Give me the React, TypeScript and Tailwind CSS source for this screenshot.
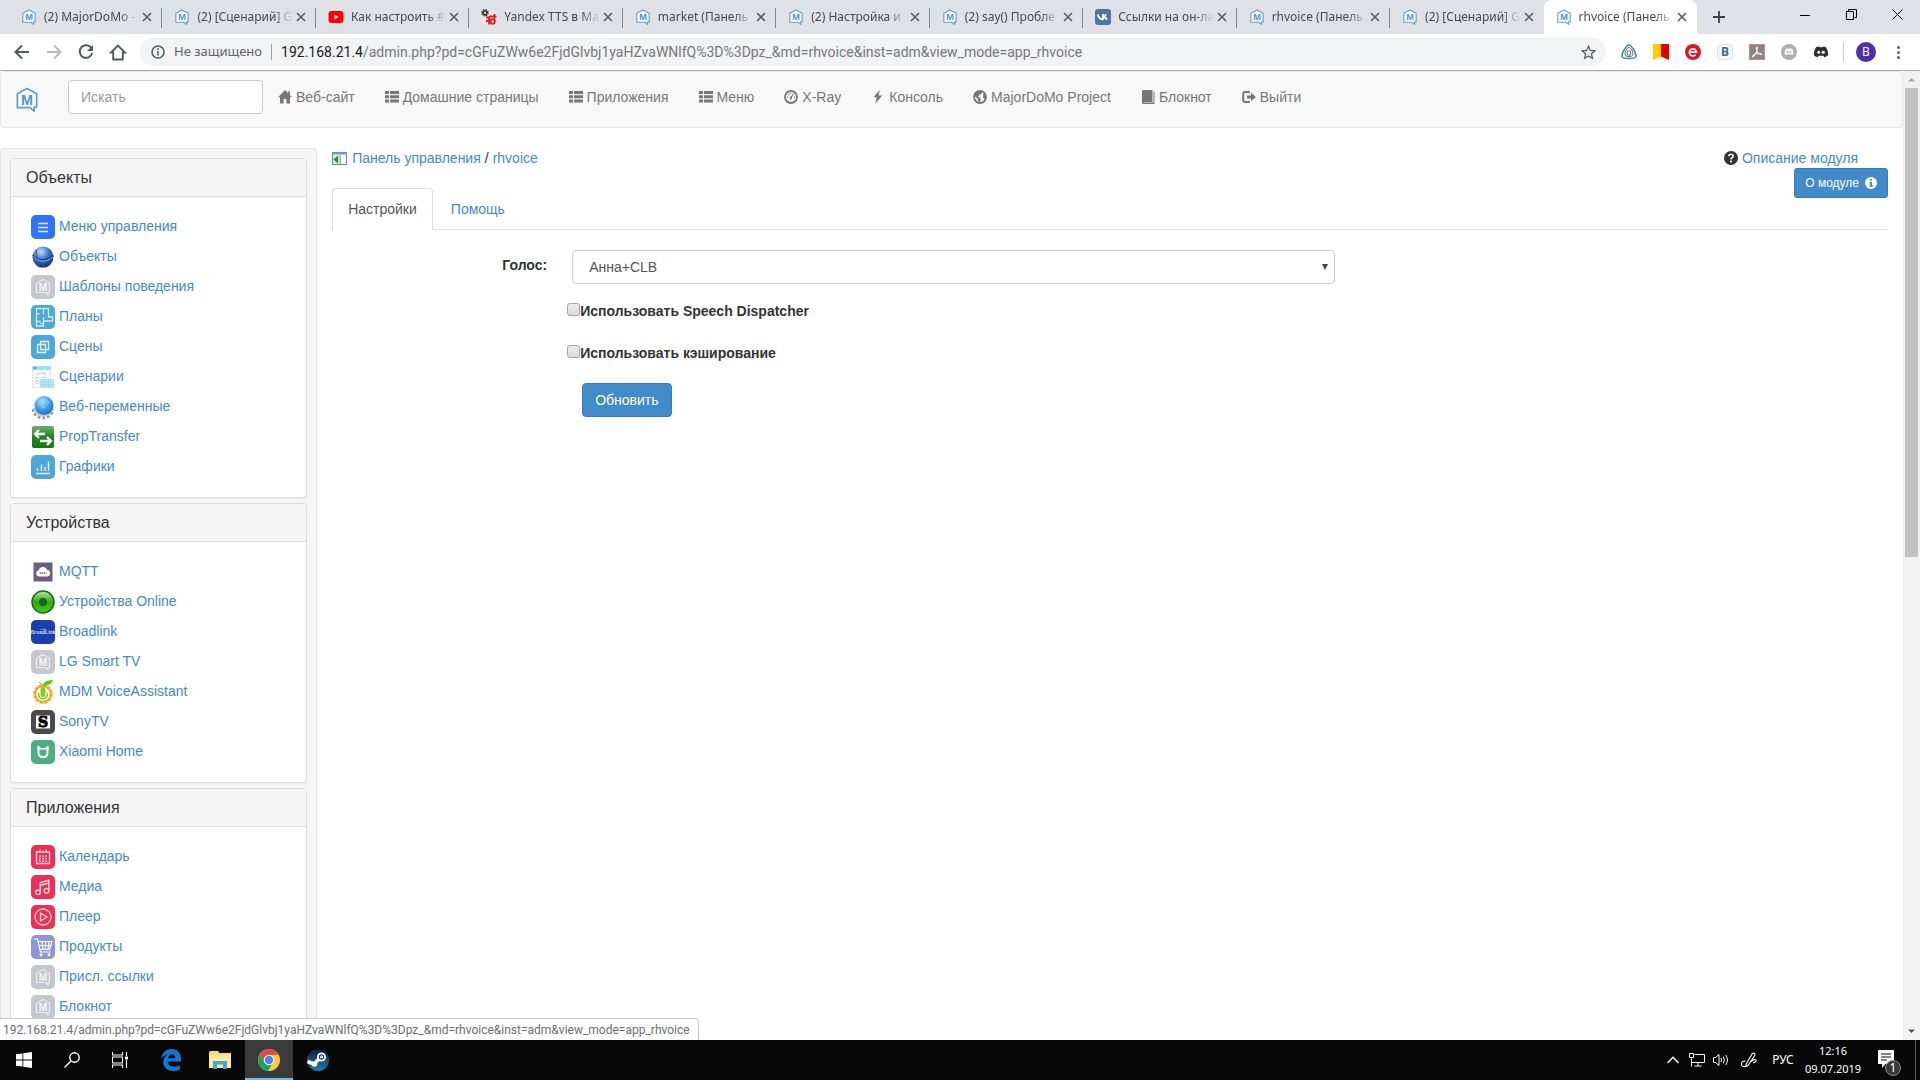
import React from "react";

type IconProps = { className?: string };

/* ---------- MajorDoMo mark ---------- */

function MdmMark({ className = "", fill = "white", stroke = "#5b9fd6", text = "#4a93d1" }: IconProps & { fill?: string; stroke?: string; text?: string }) {
  return (
    <svg viewBox="0 0 24 26" className={className} aria-hidden="true">
      <path d="M12 1.500 22 7v14h-2.500v4L15 21.500H2V7Z" fill={fill} stroke={stroke} strokeWidth="1.800" strokeLinejoin="round" />
      <text x="12" y="18.500" textAnchor="middle" fontFamily="Liberation Sans, sans-serif" fontWeight="700" fontSize="15" fill={text}>M</text>
    </svg>
  );
}

/* ---------- browser icons ---------- */

const Favicon = {
  mdm: () => <MdmMark className="h-4 w-4 shrink-0" />,
  youtube: () => (
    <svg viewBox="0 0 16 16" className="h-4 w-4 shrink-0">
      <rect x="0.500" y="2" width="15" height="12" rx="3" fill="#f00" />
      <path d="m6.500 5.500 4 2.500-4 2.500Z" fill="#fff" />
    </svg>
  ),
  gears: () => (
    <svg viewBox="0 0 16 16" className="h-4 w-4 shrink-0">
      <rect x="1" y="3" width="15" height="13" fill="#f1e3e3" />
      <circle cx="4" cy="3.800" r="2" fill="none" stroke="#3a3a3a" strokeWidth="1.800" />
      <circle cx="4" cy="3.800" r="3.200" fill="none" stroke="#3a3a3a" strokeWidth="1.200" strokeDasharray="1.400 1.100" />
      <circle cx="11.500" cy="12.500" r="2.300" fill="none" stroke="#d22" strokeWidth="2" />
      <path d="M5 8.500h3v7M8 7.500h7.500M13.500 5v5M5 12h3" stroke="#d22" strokeWidth="1.800" fill="none" />
    </svg>
  ),
  vk: () => (
    <svg viewBox="0 0 16 16" className="h-4 w-4 shrink-0">
      <rect width="16" height="16" rx="3" fill="#4a76a8" />
      <path d="M2.800 5.500c.8 3 2.300 5 5.200 5M8 5v5.500M8 8c1.500-.3 2.500-1.200 3-2.800M8.300 7.800c1.700.3 2.900 1.200 3.600 2.900" stroke="#fff" strokeWidth="1.900" fill="none" />
    </svg>
  ),
};

const Cross = ({ className = "h-2.5 w-2.5" }: IconProps) => (
  <svg viewBox="0 0 10 10" className={className} fill="none" stroke="currentColor" strokeWidth="1.600">
    <path d="m1 1 8 8M9 1 1 9" />
  </svg>
);

type Tab = { icon: keyof typeof Favicon; title: string };
const tabs: Tab[] = [
  { icon: "mdm", title: "(2) MajorDoMo -" },
  { icon: "mdm", title: "(2) [Сценарий] G" },
  { icon: "youtube", title: "Как настроить #" },
  { icon: "gears", title: "Yandex TTS в Ma" },
  { icon: "mdm", title: "market (Панель" },
  { icon: "mdm", title: "(2) Настройка и" },
  { icon: "mdm", title: "(2) say() Пробле" },
  { icon: "vk", title: "Ссылки на он-ла" },
  { icon: "mdm", title: "rhvoice (Панель" },
  { icon: "mdm", title: "(2) [Сценарий] G" },
  { icon: "mdm", title: "rhvoice (Панель" },
];

function TabStrip() {
  return (
    <div className="flex h-[34px] shrink-0 items-stretch bg-[#dee1e6] pl-[9px]">
      <div className="flex min-w-0 shrink basis-[1688px]">
        {tabs.map((t, i) => {
          const active = i === tabs.length - 1;
          const Icon = Favicon[t.icon];
          return (
            <div key={i} className={"relative flex min-w-0 flex-1 items-center pl-3 pr-2.5 " + (active ? "rounded-t-lg bg-white" : "")}>
              <Icon />
              <span className="ml-[7px] min-w-0 flex-1 overflow-hidden whitespace-nowrap text-[12px] leading-5 text-[#45494d] [mask-image:linear-gradient(to_right,black_80%,transparent)]">
                {t.title}
              </span>
              <button aria-label="Закрыть вкладку" className="flex h-4 w-[13px] items-center justify-end text-[#5a5d61]">
                <Cross />
              </button>
              {i < tabs.length - 2 && <span className="absolute right-0 top-2 h-5 w-px bg-[#84878b]" />}
            </div>
          );
        })}
      </div>
      <button aria-label="Новая вкладка" className="flex w-11 items-center justify-center text-[#3c4043]">
        <svg viewBox="0 0 12 12" className="h-3 w-3" stroke="currentColor" strokeWidth="1.800"><path d="M6 0v12M0 6h12" /></svg>
      </button>
      <div className="ml-auto flex h-[29px] text-black">
        <button aria-label="Свернуть" className="flex w-[46px] items-center justify-center">
          <svg viewBox="0 0 10 10" className="h-2.5 w-2.5" stroke="currentColor"><path d="M0 5.500h10" /></svg>
        </button>
        <button aria-label="Развернуть" className="flex w-[46px] items-center justify-center">
          <svg viewBox="0 0 11 11" className="h-[11px] w-[11px]" fill="none" stroke="currentColor"><path d="M.5 2.500h7v8h-7zM2.500 2.500v-2h8v8h-2" /></svg>
        </button>
        <button aria-label="Закрыть" className="flex w-[46px] items-center justify-center">
          <svg viewBox="0 0 11 11" className="h-[11px] w-[11px]" stroke="currentColor"><path d="m.5.5 10 10M10.500.5l-10 10" /></svg>
        </button>
      </div>
    </div>
  );
}

function Discord({ color, eyes }: { color: string; eyes: string }) {
  return (
    <svg viewBox="0 0 16 12" className="w-full">
      <path d="M3 1.300Q5 .3 6 .4l.5.900h3l.5-.9q1 0 3 .9 2 3 2.300 7.700-1.800 1.700-4 2.200l-.9-1.400h-4.800l-.9 1.400Q2.500 10.700.7 9 1 4.300 3 1.300Z" fill={color} />
      <circle cx="5.700" cy="6.300" r="1.500" fill={eyes} />
      <circle cx="10.300" cy="6.300" r="1.500" fill={eyes} />
    </svg>
  );
}

function Toolbar() {
  return (
    <div className="flex h-[37px] shrink-0 items-center border-b border-[#aeacad] bg-white text-[#55585c]">
      <div className="flex w-[140px] items-center gap-2 pl-[10px]">
        <button aria-label="Назад" className="flex h-6 w-6 items-center justify-center">
          <svg viewBox="0 0 16 16" className="h-4 w-4" fill="none" stroke="currentColor" strokeWidth="2"><path d="M15 8H2M8 1.500 1.500 8 8 14.500" /></svg>
        </button>
        <button aria-label="Вперёд" className="flex h-6 w-6 items-center justify-center text-[#b9bbbd]">
          <svg viewBox="0 0 16 16" className="h-4 w-4" fill="none" stroke="currentColor" strokeWidth="2"><path d="M1 8h13M8 1.500 14.500 8 8 14.500" /></svg>
        </button>
        <button aria-label="Обновить страницу" className="flex h-6 w-6 items-center justify-center">
          <svg viewBox="0 0 16 16" className="h-4 w-4" fill="none" stroke="currentColor" strokeWidth="2"><path d="M13.600 4.500A6.300 6.300 0 1 0 14.200 9" /><path d="M15 1v6H9Z" fill="currentColor" stroke="none" /></svg>
        </button>
        <button aria-label="Главная" className="flex h-6 w-6 items-center justify-center">
          <svg viewBox="0 0 18 17" className="h-[17px] w-[18px]" fill="none" stroke="currentColor" strokeWidth="1.900"><path d="M9 1.500 2 8.500h2.200V15.500h9.600V8.500H16Z" /></svg>
        </button>
      </div>
      <div className="flex h-7 min-w-0 flex-1 items-center rounded-full bg-[#f1f3f4] pl-[11px] pr-[10px]">
        <svg viewBox="0 0 14 14" className="h-[14px] w-[14px] shrink-0" fill="none" stroke="currentColor" strokeWidth="1.500"><circle cx="7" cy="7" r="6" /><path d="M7 6v4.500M7 3.300v1.600" /></svg>
        <span className="ml-[9px] whitespace-nowrap text-[13px] text-[#5f6368]">Не защищено</span>
        <span className="mx-[9px] h-4 w-px bg-[#9a9da1]" />
        <span className="min-w-0 flex-1 overflow-hidden whitespace-nowrap font-[Roboto,sans-serif] text-[14px] text-[#74787c]">
          <span className="text-[#202124]">192.168.21.4</span>/admin.php?pd=cGFuZWw6e2FjdGlvbj1yaHZvaWNlfQ%3D%3Dpz_&amp;md=rhvoice&amp;inst=adm&amp;view_mode=app_rhvoice
        </span>
        <button aria-label="Добавить в закладки">
          <svg viewBox="0 0 16 16" className="h-[15px] w-[15px]" fill="none" stroke="currentColor" strokeWidth="1.300"><path d="m8 1.200 1.900 4.600 4.900.4-3.700 3.200 1.100 4.800L8 11.600l-4.200 2.600 1.100-4.800L1.200 6.200l4.900-.4Z" /></svg>
        </button>
      </div>
      <div className="flex items-center gap-4 pl-[15px] pr-[14px]">
        <button aria-label="Расширение" className="h-4 w-4">
          <svg viewBox="0 0 16 16" className="h-4 w-4" fill="none"><path d="M8 1C10.500 1 15.300 9 15 12.300c-.2 3-13.800 3-14 0C.7 9 5.500 1 8 1Z" stroke="#3f87a0" strokeWidth="1.500" /><path d="M8 3.500c2 0 4 4.200 4 6.200s-1.500 3-4 3-4-1-4-3 2-6.200 4-6.200Z" fill="#fff" stroke="#59686f" strokeWidth="1" /><ellipse cx="8" cy="9" rx="1.800" ry="2.500" stroke="#555" strokeWidth=".9" /></svg>
        </button>
        <button aria-label="Яндекс закладки" className="h-4 w-4">
          <svg viewBox="0 0 16 16" className="h-4 w-4"><path d="M0 0h8v12.500L0 16Z" fill="#fc0" /><path d="M8 0h8v16l-8-3.500Z" fill="#e60000" /></svg>
        </button>
        <button aria-label="Скидки" className="h-4 w-4">
          <svg viewBox="0 0 16 16" className="h-4 w-4" fill="none"><circle cx="8" cy="8" r="8" fill="#d9152b" /><path d="M4.300 8.200h7.200A3.600 3.600 0 1 0 10.600 10.800" stroke="#fff" strokeWidth="1.700" /></svg>
        </button>
        <button aria-label="ВКонтакте" className="flex h-4 w-4 items-center justify-center rounded-sm border border-[#dcdfe3] bg-[#f4f6f8] text-[12px] font-bold leading-none text-[#45688e]">B</button>
        <button aria-label="PDF" className="h-4 w-4">
          <svg viewBox="0 0 16 16" className="h-4 w-4" fill="none"><rect x=".5" y=".5" width="15" height="15" fill="#8a8584" stroke="#cf8a80" /><path d="M8 3c-1.300 0-.7 2.700.3 4.500 1.200 2 3.300 3.200 4.300 3 1-.6-2.300-1.500-4.800-.8C5 10.500 3 12 3.500 12.800c.8.6 2.700-2.500 3.800-4.700C8.300 6 8.700 3.300 8 3Z" stroke="#f3efee" strokeWidth="1.100" /></svg>
        </button>
        <button aria-label="Discord (неактивен)" className="flex h-4 w-4 items-center justify-center rounded-full bg-[#adadad] px-[3px]"><Discord color="#fff" eyes="#adadad" /></button>
        <button aria-label="Discord" className="flex h-4 w-4 items-center justify-center"><Discord color="#2e2e2e" eyes="#fff" /></button>
      </div>
      <span className="h-5 w-px bg-[#c9cbce]" />
      <button aria-label="Профиль" className="ml-3 flex h-5 w-5 items-center justify-center rounded-full bg-[#512da8] text-[12px] leading-none text-white">B</button>
      <button aria-label="Меню браузера" className="ml-5 mr-5 flex w-1 flex-col items-center gap-0.5">
        <i className="h-[3px] w-[3px] rounded-full bg-[#5f6368]" />
        <i className="h-[3px] w-[3px] rounded-full bg-[#5f6368]" />
        <i className="h-[3px] w-[3px] rounded-full bg-[#5f6368]" />
      </button>
    </div>
  );
}

/* ---------- site navigation ---------- */

const NavIcon: Record<string, React.ReactNode> = {
  home: <path d="M7 0 0 7.300h2V13.500h3.600V9h2.800v4.500H12V7.300h2l-2-2.100V1.300h-1.800v2Z" fill="currentColor" />,
  list: <path d="M0 1h4v3H0zm5 0h9v3H5zM0 5.300h4v3H0zm5 0h9v3H5zM0 9.600h4v3H0zm5 0h9v3H5z" fill="currentColor" />,
  dash: (
    <g fill="none" stroke="currentColor">
      <circle cx="7" cy="7" r="6" strokeWidth="1.800" />
      <path d="M7 7.500 9.500 3.500M4 4.300l.8.800M3 7.200h1M10 7.200h1M6.300 3v1" strokeWidth="1.200" />
      <circle cx="7" cy="8" r="1.200" fill="currentColor" stroke="none" />
    </g>
  ),
  flash: <path d="M8.800 0 2.500 7.300h3.300L4 14l7.300-8.400H7.500Z" fill="currentColor" />,
  globe: (
    <g>
      <circle cx="7" cy="7" r="6" fill="none" stroke="currentColor" strokeWidth="1.800" />
      <path d="M2 3.500 5 1.500l3.500.3L9 3.500 6.500 4.800 5 6.500l2 1.200.8 1.600L6.500 12 5 11 4.500 8.500 2 6.500ZM10 4.500l2-.5 1 2.500-1.300 2.700-1.500-1.500Z" fill="currentColor" />
    </g>
  ),
  book: <path d="M2.500 0h9v12H3.200v.6h9.300V1.500h1V14H2.300Q1 13.800 1 12.500V1.500Q1 .2 2.500 0Z" fill="currentColor" />,
  exit: (
    <g>
      <path d="M8 2H3.500Q1.200 2 1.200 4.300v5.400Q1.200 12 3.500 12H8" fill="none" stroke="currentColor" strokeWidth="2" />
      <path d="M5 5.500h4V2.800L14 7l-5 4.200V8.500H5Z" fill="currentColor" />
    </g>
  ),
};

const navItems: [string, string][] = [
  ["home", "Веб-сайт"],
  ["list", "Домашние страницы"],
  ["list", "Приложения"],
  ["list", "Меню"],
  ["dash", "X-Ray"],
  ["flash", "Консоль"],
  ["globe", "MajorDoMo Project"],
  ["book", "Блокнот"],
  ["exit", "Выйти"],
];

function NavBar() {
  return (
    <nav className="flex h-[57px] items-start rounded border border-[#e7e7e7] bg-[#f8f8f8]">
      <a href="#" aria-label="MajorDoMo" className="ml-[14px] mt-[15px]">
        <MdmMark className="h-[25px] w-6" />
      </a>
      <input
        aria-label="Искать"
        placeholder="Искать"
        className="ml-[29px] mt-2 h-[34px] w-[195px] rounded border border-[#ccc] bg-white px-3 text-[14px] placeholder:text-[#999]"
      />
      {navItems.map(([icon, label]) => (
        <a key={label} href="#" className="flex items-center gap-1 px-[15px] pb-[15px] pt-[15px] leading-5 text-[#777]">
          <svg viewBox="0 0 14 14" className="h-[14px] w-[14px]">{NavIcon[icon]}</svg>
          {label}
        </a>
      ))}
    </nav>
  );
}

/* ---------- sidebar ---------- */

const Tile = ({ bg, children }: { bg: string; children: React.ReactNode }) => (
  <svg viewBox="0 0 24 24" className="h-6 w-6 shrink-0" fill="none">
    <rect width="24" height="24" rx="5" fill={bg} />
    {children}
  </svg>
);

const Plain = ({ children }: { children: React.ReactNode }) => (
  <svg viewBox="0 0 24 24" className="h-6 w-6 shrink-0" fill="none">{children}</svg>
);

const mdmTile = (
  <Tile bg="#c6c6ce">
    <path d="m12 4.500 6.500 3.800v9.200H17v2.300l-2.800-2.300H5.500V8.300Z" stroke="#ececf0" strokeWidth="1.200" />
    <text x="12" y="16" textAnchor="middle" fontFamily="Liberation Sans, sans-serif" fontWeight="700" fontSize="10" fill="#f6f6f8">M</text>
  </Tile>
);

const icons: Record<string, React.ReactNode> = {
  menu: <Tile bg="#2f74fb"><path d="M7 8.500h10M7 12.500h10M7 16.500h10" stroke="#e4edff" strokeWidth="1.300" /></Tile>,
  objects: (
    <Plain>
      <defs>
        <radialGradient id="orb" cx=".4" cy=".25" r=".8"><stop offset="0" stopColor="#c4dcf7" /><stop offset=".45" stopColor="#3f78c9" /><stop offset="1" stopColor="#0b2470" /></radialGradient>
      </defs>
      <ellipse cx="12" cy="21" rx="7" ry="2" fill="#c9d2e4" />
      <circle cx="12" cy="12" r="10.500" fill="url(#orb)" />
      <path d="M1.800 10C6 16 15 17 22.300 10.500" stroke="#16357f" strokeWidth="1.200" />
      <path d="M5 4.500c0 6 3 13 9 17.500" stroke="#2a55a5" strokeWidth=".8" />
      <path d="M2.500 11.500C7 17 15 18 21.800 12" stroke="#a9c8f0" strokeWidth=".8" />
    </Plain>
  ),
  mdm: mdmTile,
  plans: <Tile bg="#4fa6d8"><path d="M5.500 3.500h12v8.500h4v4h-9v5h-7ZM12.500 3.500v6M12.500 12v3M5.500 9h3M5.500 16.500h4M9.500 18.500h3" stroke="#cdebf9" strokeWidth="1.300" /></Tile>,
  scenes: <Tile bg="#4fa6d8"><path d="M9.500 6.500h8v8h-8zM6.500 9.500h8v8h-8z" stroke="#e3f3fb" strokeWidth="1.300" /></Tile>,
  scripts: (
    <Plain>
      <rect x="1.500" y="1.500" width="18" height="21" fill="#f5f7f8" stroke="#dfe5e8" />
      <rect x="1" y="1" width="19" height="4" fill="#9fe0f2" />
      <path d="M2.500 3h3" stroke="#3b8fd0" strokeWidth="1.500" />
      <path d="M8 8h6M5 12.500h3M11 12.500h4M7 8v3M14 8v3M4.500 17l2-2 2 2-2 2Z" stroke="#b9c2c8" strokeDasharray="2 1" />
      <rect x="9" y="14" width="14" height="9" fill="#b6e6f3" />
      <path d="M9 17h14M9 20h14M13 14v9M18 14v9" stroke="#8fd3e8" strokeDasharray="1.500 1" />
    </Plain>
  ),
  web: (
    <Plain>
      <defs>
        <radialGradient id="globe" cx=".4" cy=".3" r=".8"><stop offset="0" stopColor="#b9e4ff" /><stop offset=".5" stopColor="#3ba0ea" /><stop offset="1" stopColor="#1565b8" /></radialGradient>
      </defs>
      <path d="M2.500 14a9.500 8.500 0 0 0 19 0" stroke="#8e9296" strokeWidth="3.500" strokeDasharray="2.500 2" />
      <path d="M3.500 13a8.500 7.500 0 0 0 17 0" stroke="#c9cbcd" strokeWidth="3" />
      <circle cx="13" cy="10.500" r="9.500" fill="url(#globe)" />
      <path d="M7 5q3 1 3 4t4 4M15 3q-1 3 3 5" stroke="#8cccf5" strokeWidth="1.200" />
    </Plain>
  ),
  prop: (
    <Plain>
      <defs><linearGradient id="prop" x1="0" y1="0" x2="0" y2="1"><stop offset="0" stopColor="#6fae6c" /><stop offset=".5" stopColor="#238322" /><stop offset="1" stopColor="#0a7a0c" /></linearGradient></defs>
      <rect x="1" y="1" width="22" height="22" rx="2" fill="url(#prop)" />
      <path d="M14 9H4.500M8 5 4 9l4 4M9 16h10.500M16 12l4 4-4 4" stroke="#f1f8f0" strokeWidth="2.400" />
    </Plain>
  ),
  charts: <Tile bg="#4fa6d8"><path d="M5 18.500h14M6.500 16v-3M10.500 16V9.500M14 16v-4M17.500 16V6.500" stroke="#e3f3fb" strokeWidth="1.400" /></Tile>,
  mqtt: (
    <Plain>
      <rect x="2.500" y="2.500" width="19" height="19" fill="#6d5d7f" />
      <path d="M8 16.500a3.200 3.200 0 0 1-.3-6.300 4.500 4.500 0 0 1 8.500-.2 3.300 3.300 0 0 1 .3 6.500Z" fill="#fff" />
      <path d="M8.500 13h7" stroke="#6d5d7f" strokeWidth="1.400" strokeDasharray="1.500 .6" />
    </Plain>
  ),
  online: (
    <Plain>
      <defs><linearGradient id="on" x1="0" y1="0" x2="0" y2="1"><stop offset="0" stopColor="#b6eaa0" /><stop offset=".5" stopColor="#2fa812" /><stop offset="1" stopColor="#45cc15" /></linearGradient></defs>
      <circle cx="12" cy="12" r="11" fill="url(#on)" stroke="#1c6b10" strokeWidth="1.500" />
      <circle cx="12" cy="12" r="4" fill="#1d5f22" />
    </Plain>
  ),
  broadlink: (
    <Tile bg="#1b40ae">
      <text x="12" y="14" textAnchor="middle" fontFamily="Liberation Sans, sans-serif" fontWeight="700" fontSize="5" fill="#cfd9f5">BroadLink</text>
      <path d="M9.500 10q3-2 6 0" stroke="#9db2e8" strokeWidth=".8" />
    </Tile>
  ),
  voice: (
    <Plain>
      <circle cx="12" cy="14" r="8.300" stroke="#f7a823" strokeWidth="2.800" strokeDasharray="3.300 1" />
      <circle cx="12" cy="14" r="7.700" stroke="#f7a823" strokeWidth="1.500" />
      <path d="M12 5.500Q13 1 21.500.5 20 5 12 5.500ZM8 2l3.500 3.500" fill="#63c21c" stroke="#63c21c" />
      <rect x="9.500" y="7" width="5" height="10" rx="2.500" fill="#7ad321" />
      <path d="M7.500 13q0 6 4.500 6t4.500-6" stroke="#7ad321" strokeWidth="1.600" />
    </Plain>
  ),
  sony: (
    <Tile bg="#4b4b4b">
      <rect x="5" y="5.500" width="14" height="13" fill="#fff" />
      <text x="12" y="17.200" textAnchor="middle" fontFamily="DejaVu Serif, serif" fontWeight="700" fontSize="14" fill="#000" stroke="#000" strokeWidth="1">S</text>
    </Tile>
  ),
  xiaomi: <Tile bg="#4caf82"><path d="M7.500 6v6.500q0 4.700 4.500 4.700t4.500-4.700V6.500" stroke="#fff" strokeWidth="1.900" /><path d="M6.600 5.500 10 8h4l3.400-2.500V10h-1.900V8.800L14.600 9.600H9.400L8.500 8.800V10H6.600Z" fill="#fff" /></Tile>,
  calendar: <Tile bg="#ec2f55"><path d="M5.500 7h13v11.500h-13zM9 4.500V8M15 4.500V8" stroke="#ffd3dc" strokeWidth="1.300" /><path d="M8 11h8M8 13.500h8M8 16h8" stroke="#ffd3dc" strokeWidth="1.300" strokeDasharray="1.800 1.200" /></Tile>,
  media: <Tile bg="#ec2f55"><path d="M9.300 17V7.500l8.500-2.300V15.500M9.300 10.300l8.500-2.300" stroke="#ffd3dc" strokeWidth="1.400" /><circle cx="7" cy="17.300" r="2.300" stroke="#ffd3dc" strokeWidth="1.400" /><circle cx="15.500" cy="15.700" r="2.300" stroke="#ffd3dc" strokeWidth="1.400" /></Tile>,
  player: <Tile bg="#ec2f55"><circle cx="12" cy="12" r="8" stroke="#ffd3dc" strokeWidth="1.300" /><path d="M9.500 8v8l6.500-4Z" stroke="#ffd3dc" strokeWidth="1.400" strokeLinejoin="round" /></Tile>,
  products: <Tile bg="#8c97d9"><path d="M3 4h3.500l3 13h10.500M7 6.500h14l-2.300 8H9M8 10.500h12M11 6.500l1 8M14.500 6.500v8M18 6.500l-1 8" stroke="#fff" strokeWidth="1.200" /><circle cx="10" cy="19.800" r="1.500" fill="#fff" /><circle cx="18" cy="19.800" r="1.500" fill="#fff" /></Tile>,
};

const groups: { title: string; items: [string, string][] }[] = [
  {
    title: "Объекты",
    items: [
      ["menu", "Меню управления"],
      ["objects", "Объекты"],
      ["mdm", "Шаблоны поведения"],
      ["plans", "Планы"],
      ["scenes", "Сцены"],
      ["scripts", "Сценарии"],
      ["web", "Веб-переменные"],
      ["prop", "PropTransfer"],
      ["charts", "Графики"],
    ],
  },
  {
    title: "Устройства",
    items: [
      ["mqtt", "MQTT"],
      ["online", "Устройства Online"],
      ["broadlink", "Broadlink"],
      ["mdm", "LG Smart TV"],
      ["voice", "MDM VoiceAssistant"],
      ["sony", "SonyTV"],
      ["xiaomi", "Xiaomi Home"],
    ],
  },
  {
    title: "Приложения",
    items: [
      ["calendar", "Календарь"],
      ["media", "Медиа"],
      ["player", "Плеер"],
      ["products", "Продукты"],
      ["mdm", "Присл. ссылки"],
      ["mdm", "Блокнот"],
    ],
  },
];

function Sidebar() {
  return (
    <aside className="flex w-1/6 shrink-0 flex-col gap-[5px] self-start rounded border border-[#e3e3e3] bg-[#f5f5f5] p-[9px]">
      {groups.map((g) => (
        <section key={g.title} className="rounded border border-[#ddd] bg-white shadow-[0_1px_1px_rgba(0,0,0,0.05)]">
          <h4 className="border-b border-[#ddd] bg-[#f5f5f5] px-[15px] pb-2 pt-[9px] text-[16px] leading-5 text-[#333]">{g.title}</h4>
          <ul className="px-5 pb-3 pt-[18px]">
            {g.items.map(([icon, label]) => (
              <li key={label} className="h-[30px]">
                <a href="#" className="flex items-start gap-1 leading-[22px] text-[#428bca]">
                  {icons[icon]}
                  {label}
                </a>
              </li>
            ))}
          </ul>
        </section>
      ))}
    </aside>
  );
}

/* ---------- module settings ---------- */

function Check({ label, className }: { label: string; className: string }) {
  return (
    <label className={"flex w-fit items-start leading-5 font-bold " + className}>
      <input type="checkbox" className="mt-0.5 h-[13px] w-[13px] appearance-none rounded-[3px] border border-[#a6a6a6] bg-linear-to-b from-[#ececec] to-[#dcdcdc]" />
      {label}
    </label>
  );
}

function Settings() {
  return (
    <main className="min-w-0 flex-1 px-[15px]">
      <div className="flex items-start justify-between border-b border-[#ddd]">
        <div>
          <div className="flex items-center gap-1 leading-5">
            <svg viewBox="0 0 16 13" className="h-[13px] w-4" fill="none">
              <rect x=".5" y=".5" width="14" height="12" fill="#fff" stroke="#6d86b0" />
              <path d="M0 1.500h15" stroke="#6d9ad0" strokeWidth="2" />
              <path d="M1 3h6v9H1z" fill="#d3edd0" />
              <path d="M6 3.500v8L1.500 7.500Z" fill="#2d8b35" />
              <path d="M8 3v9" stroke="#4d8f60" />
            </svg>
            <a href="#" className="text-[#428bca]">Панель управления</a>
            <span>/</span>
            <a href="#" className="text-[#428bca]">rhvoice</a>
          </div>
          <div className="-mb-px mt-5 flex gap-0.5 leading-5">
            <a href="#" className="rounded-t border border-b-0 border-[#ddd] bg-white px-[15px] pb-[11px] pt-[10px] text-[#555]">Настройки</a>
            <a href="#" className="px-4 pb-[11px] pt-[11px] text-[#428bca]">Помощь</a>
          </div>
        </div>
        <div className="flex flex-col items-end">
          <a href="#" className="mr-[30px] flex items-center gap-1 leading-5 text-[#428bca]">
            <svg viewBox="0 0 14 14" className="h-[14px] w-[14px]">
              <circle cx="7" cy="7" r="7" fill="#333" />
              <path d="M4.800 5.300Q4.900 3.300 7 3.300t2.200 1.800Q9.200 6 8 6.700T7 8.300" stroke="#fff" strokeWidth="1.600" fill="none" />
              <circle cx="7" cy="10.500" r="1.100" fill="#fff" />
            </svg>
            Описание модуля
          </a>
          <button className="flex h-[30px] items-center gap-1.5 rounded-[3px] border border-[#357ebd] bg-[#428bca] px-[10px] text-[12px] text-white">
            О модуле
            <svg viewBox="0 0 12 12" className="h-3 w-3">
              <circle cx="6" cy="6" r="6" fill="#fff" />
              <path d="M5 2h2v1.600H5zM4.300 4.700H7V8.600h.8V9.800H4.300V8.600H5V5.800h-.7z" fill="#428bca" />
            </svg>
          </button>
        </div>
      </div>

      <form className="pt-5" onSubmit={(e) => e.preventDefault()}>
        <div className="flex items-start">
          <label htmlFor="voice" className="w-[240px] shrink-0 pr-[25px] pt-[5px] text-right font-bold leading-5">Голос:</label>
          <div className="relative w-[49%]">
            <select id="voice" className="h-[34px] w-full appearance-none rounded border border-[#ccc] bg-white px-4 text-[14px] text-[#555]">
              <option>Анна+CLB</option>
            </select>
            <svg viewBox="0 0 6 6" className="pointer-events-none absolute right-[7px] top-[14px] h-1.5 w-1.5"><path d="M0 0h6L3 6Z" fill="#444" /></svg>
          </div>
        </div>
        <Check label="Использовать Speech Dispatcher" className="ml-[235px] mt-[17px]" />
        <Check label="Использовать кэширование" className="ml-[235px] mt-[22px]" />
        <button className="ml-[250px] mt-5 h-[34px] rounded border border-[#357ebd] bg-[#428bca] px-3 text-[14px] text-white">Обновить</button>
      </form>
    </main>
  );
}

function ScrollBar() {
  return (
    <div className="flex w-[17px] shrink-0 flex-col items-center bg-[#f1f1f1]">
      <svg viewBox="0 0 17 17" className="h-[17px] w-[17px] shrink-0"><path d="M5 10.500h7L8.500 7Z" fill="#a3a3a3" /></svg>
      <div className="h-[48.4%] w-[13px] bg-[#c1c1c1]" />
      <svg viewBox="0 0 17 17" className="mt-auto h-[17px] w-[17px] shrink-0"><path d="M5 6.500h7L8.500 10Z" fill="#505050" /></svg>
    </div>
  );
}

/* ---------- taskbar ---------- */

function Taskbar() {
  return (
    <footer className="flex h-10 shrink-0 items-stretch bg-[#080808] text-white">
      <button aria-label="Пуск" className="flex w-12 items-center justify-center">
        <svg viewBox="0 0 16 16" className="h-4 w-4" fill="#fff"><path d="M0 2.300 6.500 1.400v6.200H0ZM7.300 1.300 16 0v7.600H7.300ZM0 8.400h6.500v6.200L0 13.700ZM7.300 8.400H16V16l-8.700-1.300Z" /></svg>
      </button>
      <button aria-label="Поиск" className="flex w-12 items-center justify-center">
        <svg viewBox="0 0 16 16" className="h-4 w-4" fill="none" stroke="#fff" strokeWidth="1.400"><circle cx="10.500" cy="5.500" r="4.700" /><path d="M7 9 .5 15.500" /></svg>
      </button>
      <button aria-label="Представление задач" className="flex w-12 items-center justify-center">
        <svg viewBox="0 0 16 16" className="h-4 w-4" fill="none" stroke="#fff" strokeWidth="1.100"><path d="M.5 0v3h10V0M.5 5h10v6H.5zM.5 16v-3h10v3M14.500 0v4M14.500 8v8" /><path d="M13 4.500h3v3h-3z" fill="#fff" stroke="none" /></svg>
      </button>
      <button aria-label="Edge" className="flex w-[54px] items-center justify-center">
        <svg viewBox="0 0 20 22" className="h-[22px] w-5"><path d="M0 9.700C1 4 5 0 10.500 0 17 0 20 5 20 10v2.500H6.800c.2 3.400 3 5.200 6.200 5.200 2.200 0 4-.5 5.800-1.600v4.300C17 21.500 14.600 22 12 22 6.300 22 2.300 18.500 2.300 13c0-3.700 1.900-6.500 5.200-8C5 5.200 2 6.800 0 9.700ZM6.900 9.200h7.300C14.200 6.800 13.200 5.200 11 5.200 8.800 5.200 7.300 6.900 6.900 9.200Z" fill="#0a7ad6" /></svg>
      </button>
      <button aria-label="Проводник" className="flex w-[47px] items-center justify-center pr-1">
        <svg viewBox="0 0 22 18" className="h-[18px] w-[22px]"><path d="M0 1.500Q0 0 1.500 0H9l1.500 2H22v15H0Z" fill="#fbdc7c" /><path d="M0 4h22v13H0Z" fill="#fde9a0" /><path d="M4 18v-8h14v8h-4v-4.500H8V18Z" fill="#42a8d8" /></svg>
      </button>
      <button aria-label="Chrome" className="flex w-12 items-center justify-center border-b-2 border-[#76b9ed] bg-[#3b3b3b] pt-0.5">
        <svg viewBox="0 0 22 22" className="h-[22px] w-[22px]"><circle cx="11" cy="11" r="11" fill="#fbc93e" /><path d="M1.500 5.500A11 11 0 0 1 20.500 5.500L11 6 6.500 13Z" fill="#dd4b3e" /><path d="M1.500 5.500A11 11 0 0 0 10 22L15 13.500 11 16 6.500 13.500Z" fill="#1fa15d" /><circle cx="11" cy="11" r="5.200" fill="#f1f1f1" /><circle cx="11" cy="11" r="4.200" fill="#4a86e8" /></svg>
      </button>
      <button aria-label="Steam" className="flex w-[50px] items-center justify-center">
        <svg viewBox="0 0 22 22" className="h-[22px] w-[22px]"><defs><linearGradient id="st" x1="0" y1="0" x2="0" y2="1"><stop offset="0" stopColor="#131a3a" /><stop offset="1" stopColor="#1b7fb5" /></linearGradient></defs><circle cx="11" cy="11" r="11" fill="url(#st)" /><path d="m.5 12.500 6.500 2.500 6-6" stroke="#fff" strokeWidth="3.500" fill="none" /><circle cx="14.500" cy="8" r="3.600" fill="#1b2c55" stroke="#fff" strokeWidth="1.800" /><circle cx="14.500" cy="8" r="1.800" fill="#c5d2dc" /><circle cx="7.500" cy="15" r="2.800" fill="#fff" /></svg>
      </button>
      <div className="ml-auto flex items-center">
        <button aria-label="Скрытые значки" className="flex w-6 justify-center">
          <svg viewBox="0 0 12 8" className="h-2 w-3" fill="none" stroke="#fff" strokeWidth="1.400"><path d="m.5 7L6 1.300 11.500 7" /></svg>
        </button>
        <button aria-label="Сеть" className="flex w-6 justify-center">
          <svg viewBox="0 0 16 14" className="h-[14px] w-4" fill="none" stroke="#fff"><path d="M5.500 1.500h10v8H2.500V5.500M.5.500h4v4h-4zM2.500 9.500v4M9 9.500v3M5.500 13h7" /></svg>
        </button>
        <button aria-label="Громкость" className="flex w-6 justify-center">
          <svg viewBox="0 0 16 14" className="h-[14px] w-4" fill="none" stroke="#fff"><path d="M.5 4.500h2L6 1.500v11L2.500 9.500h-2ZM8 5q1.300 2 0 4M10.300 3.500q2.300 3.500 0 7M12.700 2q3.500 5 0 10" /></svg>
        </button>
        <button aria-label="Рукописный ввод" className="flex w-8 justify-center">
          <svg viewBox="0 0 16 16" className="h-4 w-4" fill="none" stroke="#fff" strokeWidth="1.100"><path d="M5 12.500 11 2q1.500-1.500 2.500-.5t0 2.500L7 13.500l-2.500 1ZM4.500 9Q.5 9 .5 12t4 2.500M10 9.500q4-3 5-1.500t-3 3" /></svg>
        </button>
        <button className="flex w-9 justify-center font-['Noto_Sans',sans-serif] text-[12px]">РУС</button>
        <button className="w-16 text-center font-['Noto_Sans',sans-serif] text-[11px] leading-[18px]">
          <span className="block">12:16</span>
          <span className="block">09.07.2019</span>
        </button>
        <button aria-label="Центр уведомлений" className="relative ml-3 mr-[14px] h-6 w-6">
          <svg viewBox="0 0 24 24" className="h-6 w-6"><path d="M1 2h16v14h-8.500L5 20v-4H1Z" fill="#fff" /><path d="M4 6h10M4 9h10M4 12h6" stroke="#080808" strokeWidth="1.200" /></svg>
          <span className="absolute -bottom-1 right-0 flex h-4 w-4 items-center justify-center rounded-full border border-[#8a8a8a] bg-[#3a3a3a] font-['Noto_Sans',sans-serif] text-[12px] leading-none">1</span>
        </button>
        <span className="mr-1 h-10 w-px bg-[#5a5a5a]" />
      </div>
    </footer>
  );
}

export default function App() {
  return (
    <div className="flex h-screen flex-col overflow-hidden bg-white font-['Liberation_Sans',Arial,sans-serif] text-[14px] text-[#333]">
      <header className="shrink-0 font-['Noto_Sans',sans-serif]">
        <TabStrip />
        <Toolbar />
      </header>
      <div className="relative flex min-h-0 flex-1">
        <div className="min-w-0 flex-1 overflow-hidden">
          <NavBar />
          <div className="flex pt-5">
            <Sidebar />
            <Settings />
          </div>
        </div>
        <ScrollBar />
        <div className="absolute bottom-0 left-0 h-[22px] whitespace-nowrap rounded-tr border-r border-t border-[#c8c8c8] bg-white pl-[3px] pr-2 font-[Roboto,sans-serif] text-[12px] leading-[22px] text-[#6b6e72]">
          192.168.21.4/admin.php?pd=cGFuZWw6e2FjdGlvbj1yaHZvaWNlfQ%3D%3Dpz_&amp;md=rhvoice&amp;inst=adm&amp;view_mode=app_rhvoice
        </div>
      </div>
      <Taskbar />
    </div>
  );
}
